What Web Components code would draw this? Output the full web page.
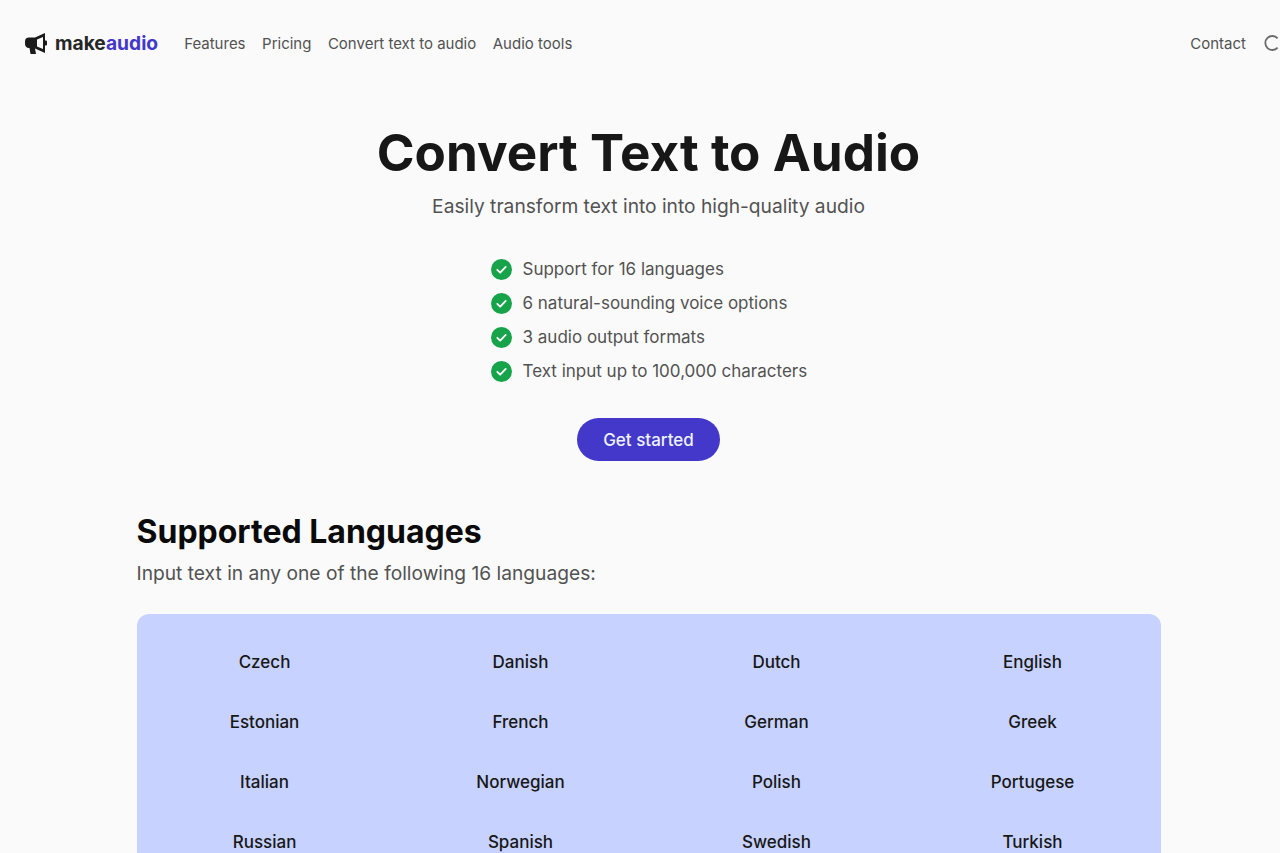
<!DOCTYPE html>
<html lang="en">
<head>
<meta charset="utf-8">
<title>makeaudio</title>
<style>
  html, body { margin: 0; height: 853px; overflow: hidden; background: #fafafa; }
  body { width: 1297px; font-family: Inter, "Liberation Sans", sans-serif; }
</style>
</head>
<body>
<site-header></site-header>
<hero-section>
  <feature-item>Support for 16 languages</feature-item>
  <feature-item>6 natural-sounding voice options</feature-item>
  <feature-item>3 audio output formats</feature-item>
  <feature-item>Text input up to 100,000 characters</feature-item>
</hero-section>
<languages-section>
  <language-cell>Czech</language-cell>
  <language-cell>Danish</language-cell>
  <language-cell>Dutch</language-cell>
  <language-cell>English</language-cell>
  <language-cell>Estonian</language-cell>
  <language-cell>French</language-cell>
  <language-cell>German</language-cell>
  <language-cell>Greek</language-cell>
  <language-cell>Italian</language-cell>
  <language-cell>Norwegian</language-cell>
  <language-cell>Polish</language-cell>
  <language-cell>Portugese</language-cell>
  <language-cell>Russian</language-cell>
  <language-cell>Spanish</language-cell>
  <language-cell>Swedish</language-cell>
  <language-cell>Turkish</language-cell>
</languages-section>
<script>
class SiteHeader extends HTMLElement {
  constructor() {
    super();
    this.attachShadow({ mode: 'open' });
    this.shadowRoot.innerHTML = `
      <style>
        :host { display: flex; align-items: center; height: 86px; padding: 0 0 0 25px; box-sizing: border-box; }
        .logo { display: flex; align-items: center; gap: 8px; font-size: 19.2px; font-weight: 700; color: #262626; margin-right: 26px; }
        .logo span { color: #4338ca; }
        .logo svg { width: 22px; height: 21px; display: block; }
        nav { display: flex; gap: 16.5px; font-size: 15px; color: #525252; }
        .right { margin-left: auto; display: flex; align-items: center; gap: 18px; font-size: 15px; color: #525252; }
        .spinner { width: 16px; height: 16px; margin-right: 17px; }
        .spinner svg { display: block; }
      </style>
      <div class="logo">
        <svg viewBox="0 0 22 21" fill="#1a1a1a">
          <path fill-rule="evenodd" d="M20 0 10 4.5H4C1.5 4.5 0 6 0 8.5V11c0 2 1.5 4 4 4h.5l1 6H11l-1-5.5 10 4.5zM18 4v12l-6-2.5v-7z"/>
          <rect x="19.5" y="7.5" width="2.5" height="5" rx="1"/>
        </svg>
        <div>make<span>audio</span></div>
      </div>
      <nav>
        <div>Features</div>
        <div>Pricing</div>
        <div>Convert text to audio</div>
        <div>Audio tools</div>
      </nav>
      <div class="right">
        <div>Contact</div>
        <div class="spinner">
          <svg width="16" height="16" viewBox="0 0 16 16" fill="none" stroke="#6b6b6b" stroke-width="1.8">
            <path d="M13.6 3.4A7 7 0 1 0 13.6 12.6"/>
          </svg>
        </div>
      </div>
    `;
  }
}
customElements.define('site-header', SiteHeader);

class FeatureItem extends HTMLElement {
  constructor() {
    super();
    this.attachShadow({ mode: 'open' });
    this.shadowRoot.innerHTML = `
      <style>
        :host { display: flex; align-items: center; gap: 10.5px; height: 34px; font-size: 17px; color: #525252; }
        svg { width: 21px; height: 21px; flex: none; }
      </style>
      <svg viewBox="0 0 21 21">
        <circle cx="10.5" cy="10.5" r="10.5" fill="#16a34a"/>
        <path d="M6.3 10.8l2.9 2.9 5.5-5.8" fill="none" stroke="#fff" stroke-width="1.8" stroke-linecap="round" stroke-linejoin="round"/>
      </svg>
      <slot></slot>
    `;
  }
}
customElements.define('feature-item', FeatureItem);

class HeroSection extends HTMLElement {
  constructor() {
    super();
    this.attachShadow({ mode: 'open' });
    this.shadowRoot.innerHTML = `
      <style>
        :host { display: flex; flex-direction: column; align-items: center; }
        h1 { margin: 31px 0 0; font-size: 51.2px; line-height: 70px; font-weight: 700; color: #171717; }
        p { margin: 5px 0 0; font-size: 19.2px; line-height: 28px; color: #525252; }
        ul { margin: 32px 0 0 491px; padding: 0; align-self: flex-start; }
        a { margin-top: 30px; height: 43px; width: 143px; box-sizing: border-box; border-radius: 22px; background: #4338ca; color: #eef2ff; font-size: 17px; font-weight: 500; display: flex; align-items: center; justify-content: center; }
      </style>
      <h1>Convert Text to Audio</h1>
      <p>Easily transform text into into high-quality audio</p>
      <ul><slot></slot></ul>
      <a>Get started</a>
    `;
  }
}
customElements.define('hero-section', HeroSection);

class LanguageCell extends HTMLElement {
  constructor() {
    super();
    this.attachShadow({ mode: 'open' });
    this.shadowRoot.innerHTML = `
      <style>
        :host { display: flex; align-items: center; justify-content: center; height: 60px; font-size: 17px; font-weight: 500; color: #171717; }
      </style>
      <slot></slot>
    `;
  }
}
customElements.define('language-cell', LanguageCell);

class LanguagesSection extends HTMLElement {
  constructor() {
    super();
    this.attachShadow({ mode: 'open' });
    this.shadowRoot.innerHTML = `
      <style>
        :host { display: block; width: 1024px; margin: 49px auto 0; }
        h2 { margin: 0; font-size: 32px; line-height: 44px; font-weight: 700; color: #0a0a0a; }
        p { margin: 5px 0 0; font-size: 19.2px; line-height: 28px; color: #525252; }
        .grid { margin-top: 27px; padding: 18px 0; background: #c7d2fe; border-radius: 12px; display: grid; grid-template-columns: repeat(4, 256px); }
      </style>
      <h2>Supported Languages</h2>
      <p>Input text in any one of the following 16 languages:</p>
      <div class="grid"><slot></slot></div>
    `;
  }
}
customElements.define('languages-section', LanguagesSection);
</script>
</body>
</html>
